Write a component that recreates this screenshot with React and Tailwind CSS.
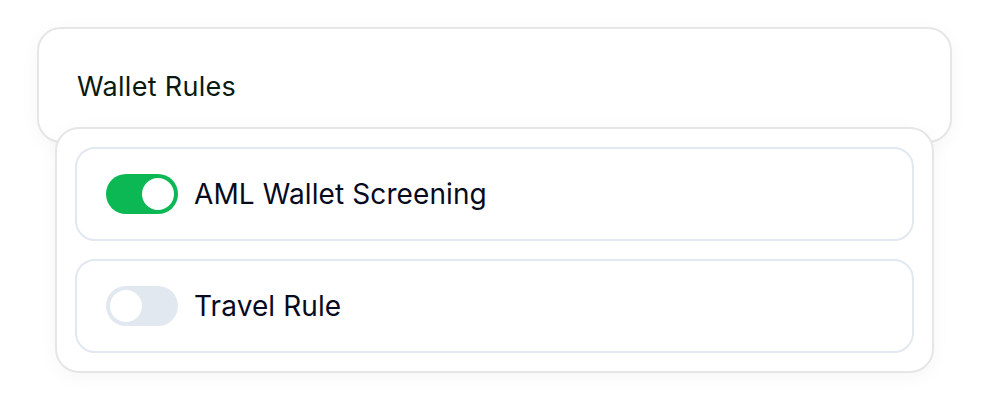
import React, { useState } from "react";

function Toggle({ on, onClick }) {
  return (
    <button
      onClick={onClick}
      className={
        "relative flex h-[40px] w-[72px] shrink-0 items-center rounded-full p-[4px] " +
        (on ? "justify-end bg-[#0bb853]" : "justify-start bg-[#e2e8f0]")
      }
    >
      <span className="block h-[32px] w-[32px] rounded-full bg-white" />
    </button>
  );
}

export default function App() {
  const [aml, setAml] = useState(true);
  const [travel, setTravel] = useState(false);
  return (
    <div
      className="min-h-[418px] w-full bg-white pt-[27px]"
      style={{ fontFamily: "Inter, 'Noto Sans', sans-serif" }}
    >
      <div className="ml-[37px] w-[915px]">
        <div className="flex h-[116px] items-start rounded-[24px] border-2 border-[#e6e6e6] bg-white pl-[38px] pt-[42px] shadow-[0_4px_20px_rgba(0,0,0,0.04)]">
          <span className="text-[27px] leading-[32px] font-normal tracking-[0.3px] text-[#0a1a10]">Wallet Rules</span>
        </div>
        <div className="relative -mt-[16px] mx-[18px] flex flex-col gap-[18px] rounded-[24px] border-2 border-[#e6e6e6] bg-white p-[18px] shadow-[0_4px_20px_rgba(0,0,0,0.04)]">
          <div className="flex h-[94px] items-center gap-[16px] rounded-[20px] border-2 border-[#e2e8f0] px-[29px]">
            <Toggle on={aml} onClick={() => setAml(!aml)} />
            <span className="text-[28px] leading-[32px] font-normal tracking-[0.1px] text-[#070b1e]">AML Wallet Screening</span>
          </div>
          <div className="flex h-[94px] items-center gap-[16px] rounded-[20px] border-2 border-[#e2e8f0] px-[29px]">
            <Toggle on={travel} onClick={() => setTravel(!travel)} />
            <span className="text-[28px] leading-[32px] font-normal tracking-[0.1px] text-[#070b1e]">Travel Rule</span>
          </div>
        </div>
      </div>
    </div>
  );
}
